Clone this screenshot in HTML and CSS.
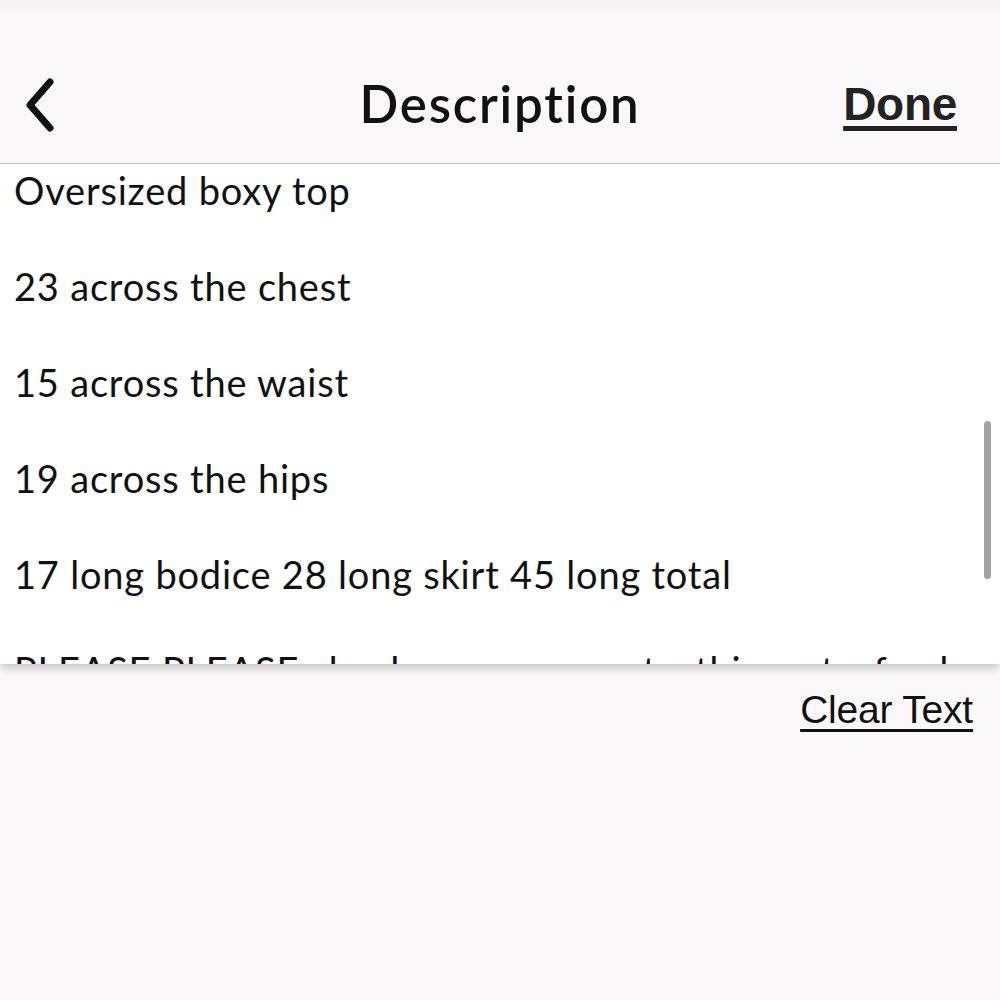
FILE: index.html
```html
<!DOCTYPE html>
<html lang="en">
<head>
    <meta charset="UTF-8">
    <meta name="viewport" content="width=device-width, initial-scale=1.0">
    <title>Description</title>
    <link rel="stylesheet" href="styles.css">
</head>
<body>

    <div class="screen">
        <div class="status"></div>

        <div class="navbar">
            <a class="back" href="#">
                <svg width="36" height="56" viewBox="0 0 36 56">
                    <path d="M28 6 L8 29 L28 52" fill="none" stroke="#111" stroke-width="7" stroke-linecap="round" stroke-linejoin="round"/>
                </svg>
            </a>
            <h1 class="title">Description</h1>
            <a class="done" href="#">Done</a>
        </div>

        <div class="editor">
            <div class="text">
                <p>Oversized boxy top</p>
                <p>23 across the chest</p>
                <p>15 across the waist</p>
                <p>19 across the hips</p>
                <p>17 long bodice 28 long skirt 45 long total</p>
                <p class="last">PLEASE PLEASE check measurements  this  gets  fresh</p>
            </div>
            <div class="scrollbar"></div>
        </div>

        <div class="footer">
            <a class="clear" href="#">Clear Text</a>
        </div>
    </div>

</body>
</html>
```

FILE: styles.css
```css
body {
    margin: 0;
    background: #faf8f9;
    font-family: Lato, "Noto Sans", sans-serif;
    color: #111;
}

.screen {
    width: 1000px;
    height: 1000px;
    display: flex;
    flex-direction: column;
    overflow: hidden;
}

.status {
    height: 10px;
    background: #f5f3f4;
}

.navbar {
    height: 154px;
    display: flex;
    align-items: center;
    justify-content: space-between;
    padding: 0 43px 0 22px;
    position: relative;
    border-bottom: 1px solid #c8c6c7;
    box-sizing: border-box;
}

.back {
    display: flex;
    margin-top: 34px;
}

.title {
    position: absolute;
    left: 0;
    right: 0;
    text-align: center;
    margin: 34px 0 0 0;
    font-size: 51px;
    font-weight: 600;
    letter-spacing: 1.8px;
    pointer-events: none;
}

.done {
    margin-top: 34px;
    font-family: "Liberation Sans", Arial, sans-serif;
    font-size: 46px;
    font-weight: bold;
    color: #222;
    letter-spacing: -0.3px;
    text-decoration: underline;
    text-decoration-thickness: 5px;
    text-underline-offset: 6px;
}

.editor {
    height: 500px;
    background: #fff;
    position: relative;
    overflow: hidden;
    box-shadow: 0 5px 8px rgba(0, 0, 0, 0.18);
    z-index: 1;
}

.text {
    padding: 2px 14px 0;
    font-size: 38px;
    line-height: 48px;
    letter-spacing: 0.8px;
}

.text p {
    margin: 0 0 48px;
    white-space: pre;
}

/* the next line is scrolled under the bottom edge */
.text .last {
    height: 20px;
    margin: 0;
    overflow: hidden;
}

.scrollbar {
    position: absolute;
    right: 9px;
    top: 257px;
    width: 7px;
    height: 158px;
    border-radius: 4px;
    background: #a3a3a3;
}

.footer {
    flex: 1;
    display: flex;
    justify-content: flex-end;
    padding: 24px 27px 0 0;
}

.clear {
    font-family: "Liberation Sans", Arial, sans-serif;
    font-size: 39px;
    color: #111;
    letter-spacing: -0.2px;
    text-decoration: underline;
    text-decoration-thickness: 3px;
    text-underline-offset: 6px;
    height: 46px;
}
```
